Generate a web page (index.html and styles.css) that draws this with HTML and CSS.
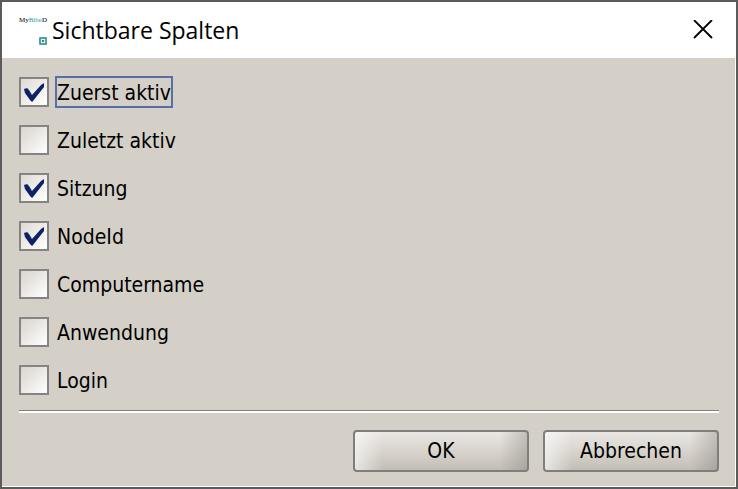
FILE: index.html
```html
<!DOCTYPE html>
<html lang="de">
<head>
    <meta charset="UTF-8">
    <meta name="viewport" content="width=device-width, initial-scale=1.0">
    <title>Sichtbare Spalten</title>
    <link rel="stylesheet" href="styles.css">
</head>
<body>
    <div class="dialog" role="dialog" aria-labelledby="dialogTitle">
        <header class="title-bar">
            <div class="logo">
                <span class="logo-text">My<span class="logo-accent">Bibe</span>D</span>
                <svg class="logo-mark" viewBox="0 0 8 8" aria-hidden="true">
                    <rect x="1" y="1" width="6" height="6" fill="#ffffff" stroke="#2a8c8a" stroke-width="1.6"/>
                    <circle cx="4" cy="4" r="1.3" fill="#2a8c8a"/>
                </svg>
            </div>
            <h1 class="title" id="dialogTitle">Sichtbare Spalten</h1>
            <button class="close-btn" type="button" aria-label="Schließen">
                <svg class="close-icon" viewBox="0 0 20 20" aria-hidden="true">
                    <path d="M1 0 L19 18 M19 0 L1 18" fill="none" stroke="#000000" stroke-width="1.8"/>
                </svg>
            </button>
        </header>

        <form class="content">
            <div class="column-list">
                <div class="column-row">
                    <input class="check" type="checkbox" id="zuerst" checked>
                    <label class="check-label focused" for="zuerst">Zuerst aktiv</label>
                </div>
                <div class="column-row">
                    <input class="check" type="checkbox" id="zuletzt">
                    <label class="check-label" for="zuletzt">Zuletzt aktiv</label>
                </div>
                <div class="column-row">
                    <input class="check" type="checkbox" id="sitzung" checked>
                    <label class="check-label" for="sitzung">Sitzung</label>
                </div>
                <div class="column-row">
                    <input class="check" type="checkbox" id="nodeid" checked>
                    <label class="check-label" for="nodeid">NodeId</label>
                </div>
                <div class="column-row">
                    <input class="check" type="checkbox" id="computername">
                    <label class="check-label" for="computername">Computername</label>
                </div>
                <div class="column-row">
                    <input class="check" type="checkbox" id="anwendung">
                    <label class="check-label" for="anwendung">Anwendung</label>
                </div>
                <div class="column-row">
                    <input class="check" type="checkbox" id="login">
                    <label class="check-label" for="login">Login</label>
                </div>
            </div>

            <div class="actions">
                <button class="action-btn" type="button">OK</button>
                <button class="action-btn" type="button">Abbrechen</button>
            </div>
        </form>
    </div>
</body>
</html>
```
FILE: styles.css
```css
* {
    margin: 0;
    padding: 0;
    box-sizing: border-box;
}

body {
    font-family: "DejaVu Sans Condensed", "DejaVu Sans", sans-serif;
    font-size: 21px;
    color: #000000;
    background: #d4d0c8;
}

.dialog {
    display: flex;
    flex-direction: column;
    min-height: 100vh;
    border: 2px solid #5c5b5c;
    background: #d4d0c8;
}

.title-bar {
    display: flex;
    align-items: center;
    height: 56px;
    padding: 0 23px 0 14px;
    background: #ffffff;
}

.logo {
    display: flex;
    flex-direction: column;
    justify-content: space-between;
    align-items: flex-end;
    width: 31px;
    height: 30px;
    margin-right: 5px;
}

.logo-text {
    font-family: "Liberation Serif", serif;
    font-size: 7px;
    line-height: 10px;
}

.logo-accent {
    color: #2a9c9a;
}

.logo-mark {
    width: 8px;
    height: 8px;
}

.title {
    flex: 1;
    font-family: "Open Sans", "Noto Sans", sans-serif;
    font-size: 23px;
    font-weight: normal;
}

.close-btn {
    display: flex;
    border: none;
    background: none;
}

.close-icon {
    width: 20px;
    height: 20px;
}

.content {
    display: flex;
    flex: 1;
    flex-direction: column;
    padding: 10px 16px 14px 17px;
    border-right: 1px solid #ffffff;
    border-bottom: 1px solid #ffffff;
}

.column-list {
    flex: 1;
}

.column-row {
    display: flex;
    align-items: center;
    gap: 6px;
    height: 48px;
}

.check {
    appearance: none;
    width: 30px;
    height: 30px;
    border: 2px solid #868482;
    background: linear-gradient(135deg, #d8d4cd, #ffffff);
}

.check:checked {
    background: url("data:image/svg+xml,%3Csvg xmlns='http://www.w3.org/2000/svg' viewBox='0 0 26 26'%3E%3Cpath d='M3 10 L6 9 L8 11 L11 16 L20 6 L23 4 L23 8 L12 22 L11 23 L9 21 L4 14 Z' fill='%23102266'/%3E%3C/svg%3E"), linear-gradient(135deg, #dedbd6, #ffffff);
}

.check-label {
    padding-top: 2px;
    border: 2px solid transparent;
    line-height: 26px;
}

.focused {
    border-color: #566fa6;
}

.actions {
    display: flex;
    justify-content: flex-end;
    gap: 14px;
    padding-top: 19px;
    border-top: 1px solid #807e7a;
    box-shadow: inset 0 2px #ffffff;
}

.action-btn {
    width: 176px;
    height: 42px;
    border: 2px solid #807e7c;
    border-radius: 4px;
    background:
        linear-gradient(90deg, rgba(255, 255, 255, 0.6), rgba(255, 255, 255, 0) 16%, rgba(120, 116, 110, 0) 84%, rgba(120, 116, 110, 0.35)),
        linear-gradient(#eae7e4, #d4d0c8 60%, #c2beb7);
    font: inherit;
}
```
